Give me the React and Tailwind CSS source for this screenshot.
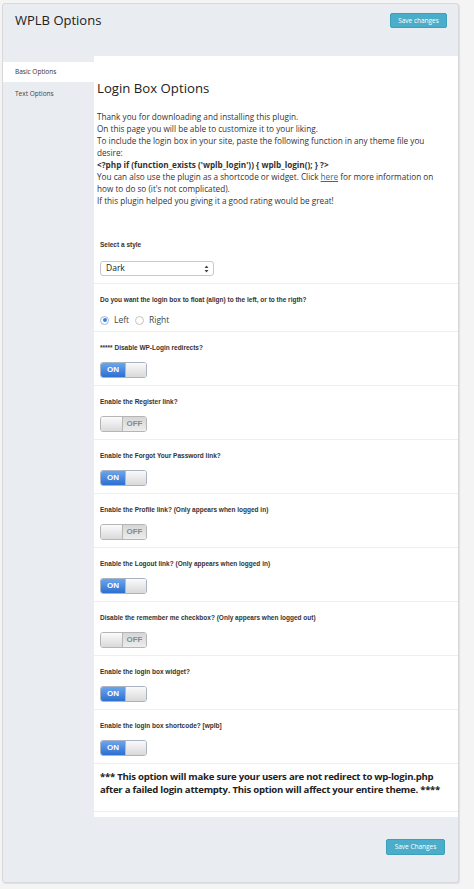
import React from 'react';

const body = { fontFamily: '"Open Sans", "Noto Sans", sans-serif' };
const label = { fontFamily: '"Liberation Sans", Arial, sans-serif' };

const toggles = [
  { text: '***** Disable WP-Login redirects?', on: true },
  { text: 'Enable the Register link?', on: false },
  { text: 'Enable the Forgot Your Password link?', on: true },
  { text: 'Enable the Profile link? (Only appears when logged in)', on: false },
  { text: 'Enable the Logout link? (Only appears when logged in)', on: true },
  { text: 'Disable the remember me checkbox? (Only appears when logged out)', on: false },
  { text: 'Enable the login box widget?', on: true },
  { text: 'Enable the login box shortcode? [wplb]', on: true },
];

const Toggle = ({ on }) => {
  if (on) {
    return (
      <div className="flex h-[16px] w-[47px] overflow-hidden rounded-[3px] border border-[#a9b3c2]">
        <div className="flex w-[24px] items-center justify-center bg-gradient-to-b from-[#6aa6ee] to-[#2c6fd0] text-[8px] font-bold text-white" style={label}>
          ON
        </div>
        <div className="flex-1 border-l border-[#b9b9b9] bg-gradient-to-b from-[#fafafa] to-[#d9d9d9]" />
      </div>
    );
  }
  return (
    <div className="flex h-[16px] w-[47px] overflow-hidden rounded-[3px] border border-[#b5b5b5]">
      <div className="w-[22px] border-r border-[#b5b5b5] bg-gradient-to-b from-[#fbfbfb] to-[#dadada]" />
      <div className="flex flex-1 items-center justify-center bg-gradient-to-b from-[#d6d6d6] to-[#ededed] text-[8px] font-bold text-[#8a8a8a]" style={label}>
        OFF
      </div>
    </div>
  );
};

const Label = ({ children }) => (
  <div className="text-[6.5px] font-bold leading-[10px] text-[#333] whitespace-nowrap" style={label}>
    {children}
  </div>
);

export default function App() {
  return (
    <div className="min-h-[889px] bg-[#f4f4f4] pl-[2px] pt-[3px]">
      <div className="w-[457px] rounded-[3px] border border-[#d6d8db] bg-[#e9ecf0] shadow-[1px_1px_1px_rgba(0,0,0,0.08)]">
        {/* Header */}
        <div className="flex h-[52px] items-start justify-between pl-[12px] pr-[11px] pt-[6px]">
          <h1 className="text-[13px] leading-[20px] text-[#222]" style={body}>WPLB Options</h1>
          <button className="mt-[3px] h-[15px] w-[57px] rounded-[2px] border border-[#3f9fbb] bg-[#4aadca] text-[6.5px] leading-[13px] text-white" style={body}>
            Save changes
          </button>
        </div>

        <div className="flex">
          {/* Sidebar */}
          <div className="w-[91px] shrink-0 pt-[6px]">
            <div className="h-[20px] bg-white pl-[12px] text-[6.5px] leading-[20px] text-[#333]" style={body}>Basic Options</div>
            <div className="mt-[2px] h-[20px] pl-[12px] text-[6.5px] leading-[20px] text-[#444]" style={body}>Text Options</div>
          </div>

          {/* Content */}
          <div className="min-w-0 flex-1 bg-white pb-[5px] pt-[22px]">
            <h2 className="pl-[3px] text-[13.2px] leading-[20px] text-[#222]" style={body}>Login Box Options</h2>
            <div className="mt-[13px] pl-[3px] text-[8.2px] leading-[12px] text-[#333] whitespace-nowrap" style={body}>
              <p>Thank you for downloading and installing this plugin.</p>
              <p>On this page you will be able to customize it to your liking.</p>
              <p>To include the login box in your site, paste the following function in any theme file you</p>
              <p>desire:</p>
              <p className="font-bold">{"<?php if  (function_exists ('wplb_login'))   { wplb_login(); } ?>"}</p>
              <p>
                You can also use the plugin as a shortcode or widget. Click{' '}
                <a className="text-[#21759b] underline">here</a> for more information on
              </p>
              <p>how to do so (it's not complicated).</p>
              <p>If this plugin helped you giving it a good rating would be great!</p>
            </div>

            <div className="mt-[21px]">
              <div className="border-b border-[#efefef] pb-[7px] pl-[6px] pt-[12px]">
                <Label>Select a style</Label>
                <div className="mt-[11px] flex h-[15px] w-[114px] items-center justify-between rounded-[3px] border border-[#c8c8c8] bg-white pl-[5px] pr-[4px] text-[8.5px] text-[#222]" style={body}>
                  <span>Dark</span>
                  <svg width="5" height="8" viewBox="0 0 5 8">
                    <path d="M0.5 3 L2.5 0.6 L4.5 3 Z M0.5 5 L2.5 7.4 L4.5 5 Z" fill="#444" />
                  </svg>
                </div>
              </div>

              <div className="border-b border-[#efefef] pb-[5px] pl-[6px] pt-[11px]">
                <Label>Do you want the login box to float (align) to the left, or to the rigth?</Label>
                <div className="mt-[9px] flex h-[12px] items-center text-[8.5px] text-[#444]" style={body}>
                  <span className="flex h-[9px] w-[9px] items-center justify-center rounded-full border border-[#9fb8d6] bg-white">
                    <span className="h-[4px] w-[4px] rounded-full bg-[#3b82d6]" />
                  </span>
                  <span className="ml-[5px]">Left</span>
                  <span className="ml-[6px] h-[9px] w-[9px] rounded-full border border-[#c4c4c4] bg-white" />
                  <span className="ml-[5px]">Right</span>
                </div>
              </div>

              {toggles.map((t) => (
                <div key={t.text} className="border-b border-[#efefef] pb-[7px] pl-[6px] pt-[11px]">
                  <Label>{t.text}</Label>
                  <div className="mt-[9px]">
                    <Toggle on={t.on} />
                  </div>
                </div>
              ))}

              <div className="border-b border-[#efefef] pb-[15px] pl-[6px] pt-[6px] text-[9.6px] font-bold leading-[13px] tracking-[-0.25px] text-[#222] whitespace-nowrap" style={body}>
                <p>*** This option will make sure your users are not redirect to wp-login.php</p>
                <p>after a failed login attempty. This option will affect your entire theme. ****</p>
              </div>
            </div>
          </div>
        </div>

        {/* Footer */}
        <div className="flex h-[65px] items-start justify-end pr-[13px] pt-[22px]">
          <button className="h-[16px] w-[59px] rounded-[2px] border border-[#3f9fbb] bg-[#4aadca] text-[6.5px] leading-[14px] text-white" style={body}>
            Save Changes
          </button>
        </div>
      </div>
    </div>
  );
}
